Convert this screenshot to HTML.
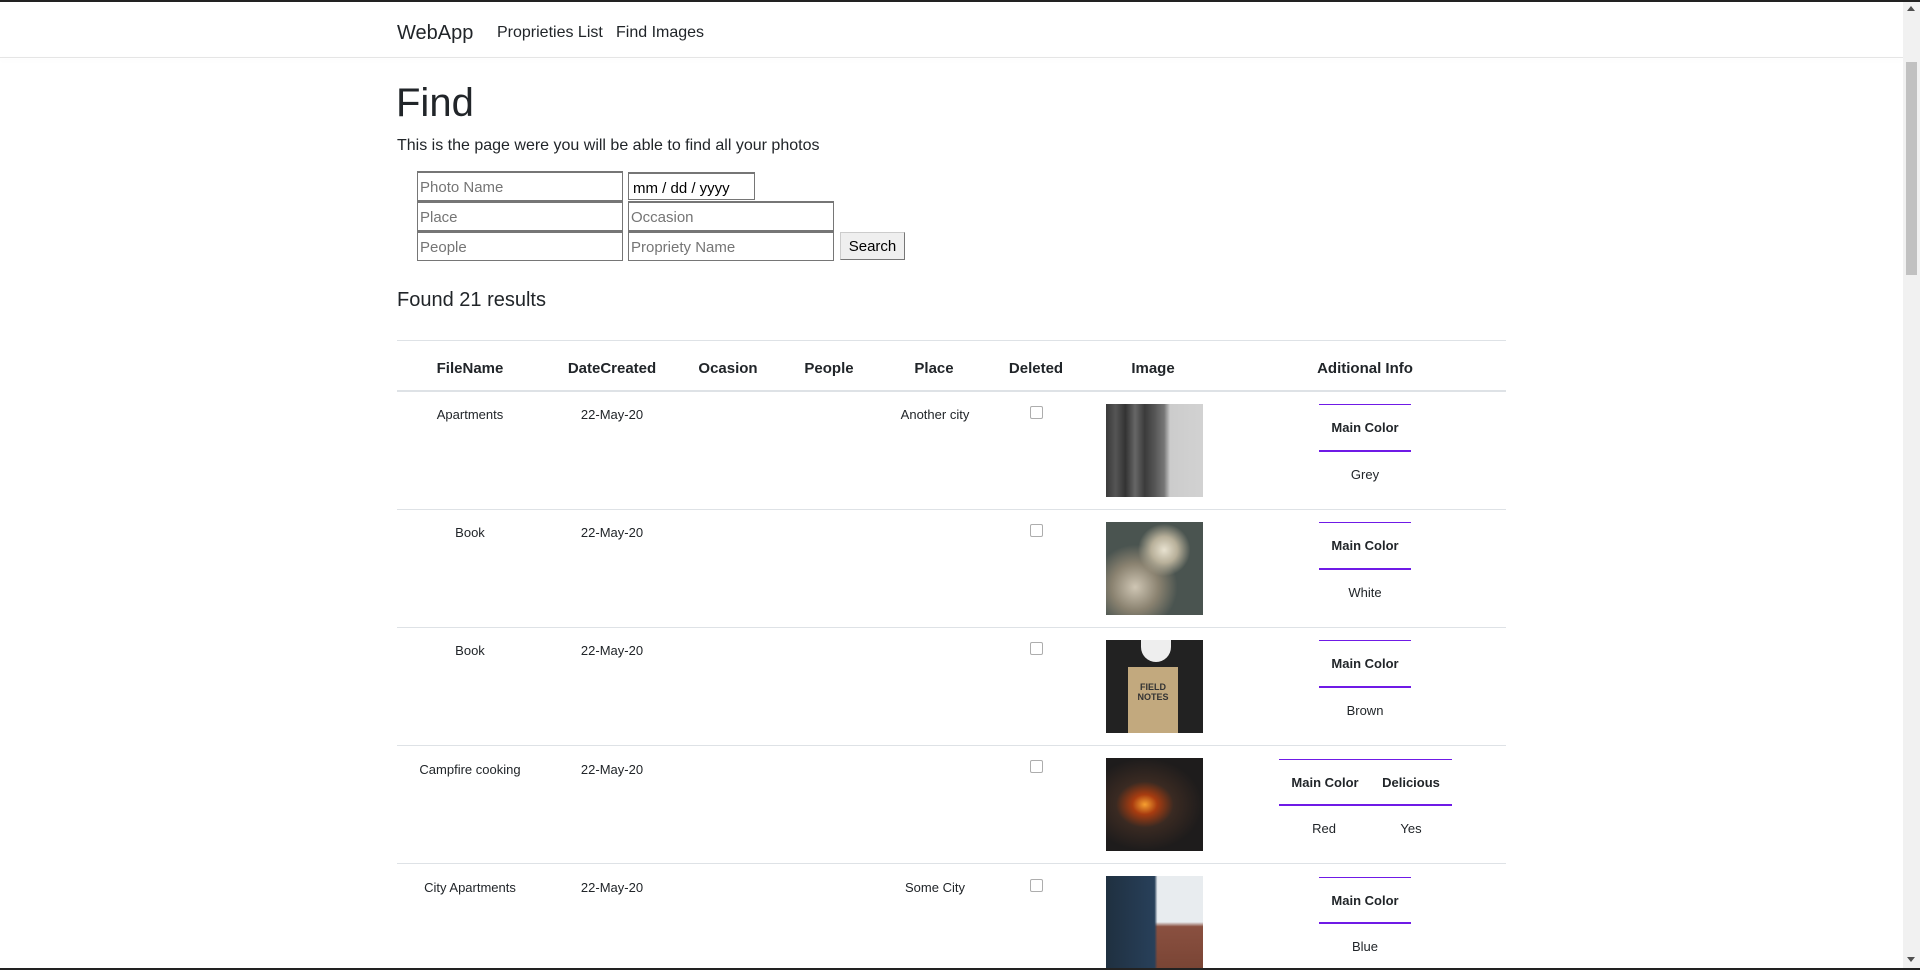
<!DOCTYPE html>
<html><head><meta charset="utf-8"><style>
*{box-sizing:border-box;margin:0;padding:0}
body{width:1920px;height:970px;overflow:hidden;background:#fff;font-family:"Liberation Sans",sans-serif;color:#212529;position:relative}
.a{position:absolute;white-space:nowrap}
.inp{position:absolute;border:1px solid #767676;border-top:2px solid #767676;height:30px;font-size:15px;color:#757575;padding:6px 2px 4px;background:#fff}
.th{position:absolute;top:360px;font-weight:bold;font-size:15px;transform:translateX(-50%)}
.td{position:absolute;font-size:13px;transform:translateX(-50%)}
.hl{position:absolute;left:397px;width:1109px;height:1px;background:#dee2e6}
.cb{position:absolute;width:13px;height:13px;border:1px solid #adadad;border-radius:2px;background:#fff}
.img{position:absolute;left:1106px;width:97px;height:93px}
.pl{position:absolute;background:#6f1ae6}
</style></head><body>
<div class="a" style="left:0;top:0;width:1920px;height:2px;background:#222"></div>
<div class="a" style="left:0;top:57px;width:1903px;height:1px;background:#e5e5e5;box-shadow:0 2px 6px rgba(0,0,0,.06)"></div>
<div class="a" style="left:397px;top:22px;font-size:20px">WebApp</div>
<div class="a" style="left:497px;top:24px;font-size:16px">Proprieties List</div>
<div class="a" style="left:616px;top:24px;font-size:16px">Find Images</div>
<div class="a" style="left:396px;top:81px;font-size:40px">Find</div>
<div class="a" style="left:397px;top:137px;font-size:16px">This is the page were you will be able to find all your photos</div>
<div class="inp" style="left:417px;top:171px;width:206px">Photo Name</div>
<div class="inp" style="left:628px;top:172px;width:127px;height:28px;color:#000;padding-left:4px">mm / dd / yyyy</div>
<div class="inp" style="left:417px;top:201px;width:206px">Place</div>
<div class="inp" style="left:628px;top:201px;width:206px">Occasion</div>
<div class="inp" style="left:417px;top:231px;width:206px">People</div>
<div class="inp" style="left:628px;top:231px;width:206px">Propriety Name</div>
<div class="a" style="left:840px;top:232px;width:65px;height:28px;background:#efefef;border:1px solid #767676;border-color:#ccc #767676 #767676 #ccc;font-size:15px;text-align:center;line-height:28px;color:#000">Search</div>
<div class="a" style="left:397px;top:289px;font-size:20px">Found 21 results</div>
<div class="hl" style="top:340px"></div>
<div class="th" style="left:470px">FileName</div>
<div class="th" style="left:612px">DateCreated</div>
<div class="th" style="left:728px">Ocasion</div>
<div class="th" style="left:829px">People</div>
<div class="th" style="left:934px">Place</div>
<div class="th" style="left:1036px">Deleted</div>
<div class="th" style="left:1153px">Image</div>
<div class="th" style="left:1365px">Aditional Info</div>
<div class="hl" style="top:390px;height:2px"></div>
<div class="hl" style="top:509px"></div>
<div class="hl" style="top:627px"></div>
<div class="hl" style="top:745px"></div>
<div class="hl" style="top:863px"></div>

<div class="td" style="left:470px;top:407px">Apartments</div>
<div class="td" style="left:612px;top:407px">22-May-20</div>
<div class="td" style="left:935px;top:407px">Another city</div>
<div class="cb" style="left:1030px;top:406px"></div>
<div class="img" style="top:404px;background:linear-gradient(90deg,#3a3a3a 0,#555 10%,#333 20%,#666 30%,#3b3b3b 40%,#555 50%,#777 60%,#ccc 66%,#d2d2d2 100%)"></div>

<div class="td" style="left:470px;top:525px">Book</div>
<div class="td" style="left:612px;top:525px">22-May-20</div>
<div class="cb" style="left:1030px;top:524px"></div>
<div class="img" style="top:522px;background:radial-gradient(circle at 60% 30%,#e8e2d0 0,#b8b09a 15%,transparent 30%),radial-gradient(circle at 30% 70%,#cfc6b4 0,#8a8270 25%,transparent 45%),#4a5450"></div>

<div class="td" style="left:470px;top:643px">Book</div>
<div class="td" style="left:612px;top:643px">22-May-20</div>
<div class="cb" style="left:1030px;top:642px"></div>
<div class="img" style="top:640px;background:#222"><div style="position:absolute;left:22px;top:27px;width:50px;height:66px;background:#c2a97e;font-size:9px;font-weight:bold;text-align:center;padding-top:15px;line-height:10px;color:#333">FIELD<br>NOTES</div><div style="position:absolute;left:35px;top:0;width:30px;height:22px;border-radius:0 0 15px 15px;background:#eee"></div></div>

<div class="td" style="left:470px;top:762px">Campfire cooking</div>
<div class="td" style="left:612px;top:762px">22-May-20</div>
<div class="cb" style="left:1030px;top:760px"></div>
<div class="img" style="top:758px;background:radial-gradient(ellipse at 40% 50%,#f7a030 0,#a83c10 15%,#3a2a22 35%,#1e1c1c 70%)"></div>

<div class="td" style="left:470px;top:880px">City Apartments</div>
<div class="td" style="left:612px;top:880px">22-May-20</div>
<div class="td" style="left:935px;top:880px">Some City</div>
<div class="cb" style="left:1030px;top:879px"></div>
<div class="img" style="top:876px;height:92px;background:linear-gradient(90deg,#1f3040 0,#28405a 50%,transparent 53%),linear-gradient(#e8ecef 0,#e8ecef 50%,#8a5040 55%,#7a4535 100%)"></div>

<div class="pl" style="left:1319px;top:404px;width:92px;height:1px"></div>
<div class="td" style="left:1365px;top:420px;font-weight:bold">Main Color</div>
<div class="pl" style="left:1319px;top:450px;width:92px;height:2px"></div>
<div class="td" style="left:1365px;top:467px">Grey</div>

<div class="pl" style="left:1319px;top:522px;width:92px;height:1px"></div>
<div class="td" style="left:1365px;top:538px;font-weight:bold">Main Color</div>
<div class="pl" style="left:1319px;top:568px;width:92px;height:2px"></div>
<div class="td" style="left:1365px;top:585px">White</div>

<div class="pl" style="left:1319px;top:640px;width:92px;height:1px"></div>
<div class="td" style="left:1365px;top:656px;font-weight:bold">Main Color</div>
<div class="pl" style="left:1319px;top:686px;width:92px;height:2px"></div>
<div class="td" style="left:1365px;top:703px">Brown</div>

<div class="pl" style="left:1279px;top:759px;width:173px;height:1px"></div>
<div class="td" style="left:1325px;top:775px;font-weight:bold">Main Color</div>
<div class="td" style="left:1411px;top:775px;font-weight:bold">Delicious</div>
<div class="pl" style="left:1279px;top:804px;width:173px;height:2px"></div>
<div class="td" style="left:1324px;top:821px">Red</div>
<div class="td" style="left:1411px;top:821px">Yes</div>

<div class="pl" style="left:1319px;top:877px;width:92px;height:1px"></div>
<div class="td" style="left:1365px;top:893px;font-weight:bold">Main Color</div>
<div class="pl" style="left:1319px;top:922px;width:92px;height:2px"></div>
<div class="td" style="left:1365px;top:939px">Blue</div>

<div class="a" style="left:1903px;top:2px;width:17px;height:966px;background:#f1f1f1"></div>
<div class="a" style="left:1906px;top:62px;width:11px;height:213px;background:#c1c1c1"></div>
<div class="a" style="left:1907px;top:6px;width:0;height:0;border:4px solid transparent;border-bottom:5px solid #505050;border-top:0"></div>
<div class="a" style="left:1907px;top:957px;width:0;height:0;border:4px solid transparent;border-top:5px solid #505050;border-bottom:0"></div>
<div class="a" style="left:0;top:968px;width:1920px;height:2px;background:#222"></div>
</body></html>
